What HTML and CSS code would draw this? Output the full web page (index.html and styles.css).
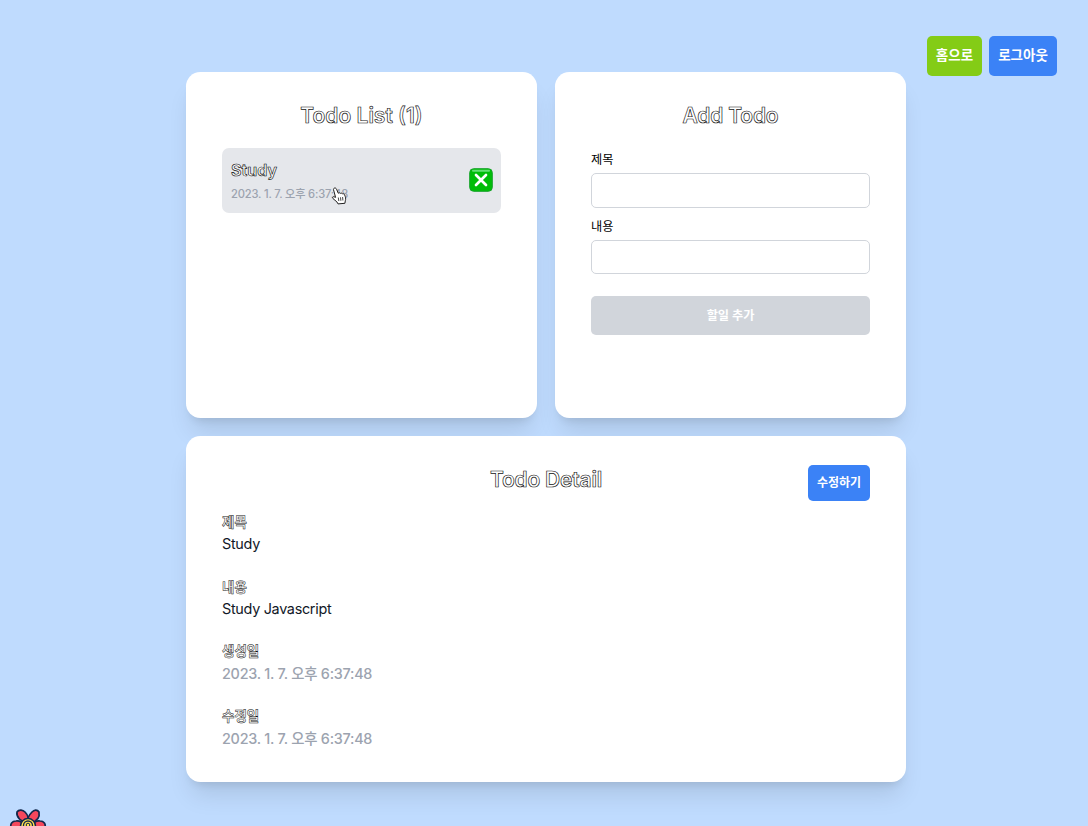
FILE: index.html
```html
<!DOCTYPE html>
<html lang="ko">
<head>
<meta charset="utf-8">
<title>Todo</title>
<link rel="stylesheet" href="styles.css">
</head>
<body>
<header class="topbar">
  <button class="btn btn-home">홈으로</button>
  <button class="btn btn-logout">로그아웃</button>
</header>
<main class="board">
  <section class="card">
    <h2 class="title outlined">Todo List (1)</h2>
    <div class="todo">
      <div class="todo-text">
        <h3 class="todo-name outlined">Study</h3>
        <p class="todo-date">2023. 1. 7. 오후 6:37:48</p>
      </div>
      <svg class="remove" viewBox="0 0 24 24">
        <rect x=".7" y=".7" width="22.600" height="22.600" rx="4" fill="#00bd08" stroke="#16a329"/>
        <path d="M4 2.800h16" stroke="#62df72" stroke-width="2" stroke-linecap="round"/>
        <path d="M7 7l10 10M17 7L7 17" stroke="#fff" stroke-width="2.700" stroke-linecap="round"/>
      </svg>
      <svg class="pointer" viewBox="0 0 16 18">
        <path d="M3.200 1.200c1-.6 1.900 0 2.300 1l1.800 4.100c.6-.7 1.600-.7 2 .1.800-.6 1.700-.4 2.100.5 1-.4 1.800 0 2.200.9.800 2 1.500 4 .7 6l-.4 2.500-6.900.6-1.100-2-3.900-3.300c-.9-.9-.3-2.100.9-1.900l1.700.7L2.600 3c-.3-.8 0-1.500.6-1.800z" fill="#fff" stroke="#222" stroke-width="1"/>
        <path d="M7.300 10.500l.5 3.500M9.500 10.300l.4 3.500M11.600 10l.3 3.500" stroke="#333" stroke-width=".9"/>
      </svg>
    </div>
  </section>
  <section class="card">
    <h2 class="title title-tight outlined">Add Todo</h2>
    <form class="form">
      <label class="label" for="title">제목</label>
      <input class="field" id="title">
      <label class="label" for="content">내용</label>
      <input class="field field-last" id="content">
      <button class="submit" type="button">할일 추가</button>
    </form>
  </section>
  <section class="card card-wide">
    <div class="detail-head">
      <h2 class="title title-tight outlined">Todo Detail</h2>
      <button class="btn btn-edit">수정하기</button>
    </div>
    <dl class="details">
      <div><dt class="outlined">제목</dt><dd>Study</dd></div>
      <div><dt class="outlined">내용</dt><dd>Study Javascript</dd></div>
      <div><dt class="outlined">생성일</dt><dd class="muted">2023. 1. 7. 오후 6:37:48</dd></div>
      <div><dt class="outlined">수정일</dt><dd class="muted">2023. 1. 7. 오후 6:37:48</dd></div>
    </dl>
  </section>
</main>
<svg class="flower" viewBox="0 0 38 18">
  <g stroke="#12284c" stroke-width="1.700" stroke-linejoin="round" fill="#f5475c">
    <path d="M2 19c-1-4 1-7 5-7 4-.5 7 1 10 7z"/>
    <path d="M36 19c1-4-1-7-5-7-4-.5-7 1-10 7z"/>
    <path d="M18.500 14C12 13 7 8 8 3c2-3 6-2 8 0 3 3 4 7 2.500 11z"/>
    <path d="M19 13c-1-4 1-7 4-10 2-2 5-3 7 0 1 5-2 9-8 11z"/>
  </g>
  <circle cx="19" cy="17" r="7.500" fill="#ffe04d" stroke="#12284c" stroke-width="1.500"/>
  <circle cx="19" cy="16.500" r="4.500" fill="#ffe04d" stroke="#12284c" stroke-width="1.300"/>
  <circle cx="19" cy="16" r="1.800" fill="none" stroke="#12284c"/>
</svg>
</body>
</html>
```
FILE: styles.css
```css
* { box-sizing: border-box; margin: 0; }
body {
  height: 826px;
  overflow: hidden;
  position: relative;
  background: #bfdbfe;
  color: #111827;
  font: 14.4px/21.6px Inter, "Noto Sans CJK KR", sans-serif;
}
button, input { font: inherit; }
.topbar {
  display: flex;
  justify-content: flex-end;
  gap: 7px;
  padding: 36px 31px 0;
  margin-bottom: -4px;
}
.btn {
  border: 0;
  padding: 0;
  border-radius: 5px;
  color: #fff;
  font-weight: 700;
  white-space: nowrap;
}
.btn-home { width: 55px; height: 40px; background: #84cc16; font-size: 13.5px; }
.btn-logout { width: 68px; height: 40px; background: #3b82f6; font-size: 13.5px; }
.btn-edit { width: 62px; height: 36px; background: #3b82f6; font-size: 12px; }
.board {
  display: grid;
  grid-template-columns: 351px 351px;
  grid-template-rows: 346px 346px;
  gap: 18px;
  margin-left: 186px;
}
.card {
  background: #fff;
  border-radius: 14.4px;
  padding: 29px 36px;
  box-shadow: 0 18px 23px -5px rgb(0 0 0 / .1), 0 7px 9px -5px rgb(0 0 0 / .1);
}
.card-wide { grid-column: 1 / 3; }
.outlined { color: #fff; -webkit-text-stroke: .65px #111; }
.title {
  font-size: 21px;
  line-height: 29px;
  font-weight: 600;
  text-align: center;
}
.title-tight { letter-spacing: -.2px; }
.todo {
  position: relative;
  display: flex;
  align-items: center;
  justify-content: space-between;
  height: 65px;
  margin-top: 18px;
  padding: 0 9px;
  border-radius: 7px;
  background: #e5e7eb;
}
.todo-text { padding-top: 2px; }
.todo-name { font-size: 16.2px; line-height: 25px; font-weight: 600; }
.todo-date { font-size: 11.2px; line-height: 22px; letter-spacing: -.18px; font-weight: 500; color: #9ca3af; }
.remove { width: 24px; height: 24px; margin: 0 -1px 2px 0; }
.pointer { position: absolute; left: 109px; top: 39px; width: 16px; height: 18px; }
.form { display: flex; flex-direction: column; padding-top: 20px; }
.label { font-size: 12.2px; line-height: 18px; height: 23px; padding-top: 1px; font-weight: 400; color: #000; }
.field {
  height: 35px;
  border: 1px solid #d1d5db;
  border-radius: 5px;
  background: #fff;
  margin-bottom: 9px;
}
.field-last { height: 34px; margin-bottom: 22px; }
.submit {
  height: 39px;
  border: 0;
  border-radius: 5px;
  background: #d1d5db;
  color: #fff;
  font-size: 12.2px;
  font-weight: 700;
}
.detail-head {
  display: grid;
  grid-template-columns: 62px 1fr 62px;
  height: 36px;
}
.detail-head .title { grid-column: 2; }
.details { display: flex; flex-direction: column; gap: 21.6px; padding-top: 10.8px; }
.details dt { font-weight: 600; font-size: 13.5px; }
.details .outlined { -webkit-text-stroke-width: .5px; }
.details dd { font-size: 14.4px; letter-spacing: -.3px; }
.details .muted { color: #9ca3af; letter-spacing: -.25px; font-weight: 500; }
.flower { position: absolute; left: 9px; bottom: -1px; width: 38px; height: 18px; }
```
